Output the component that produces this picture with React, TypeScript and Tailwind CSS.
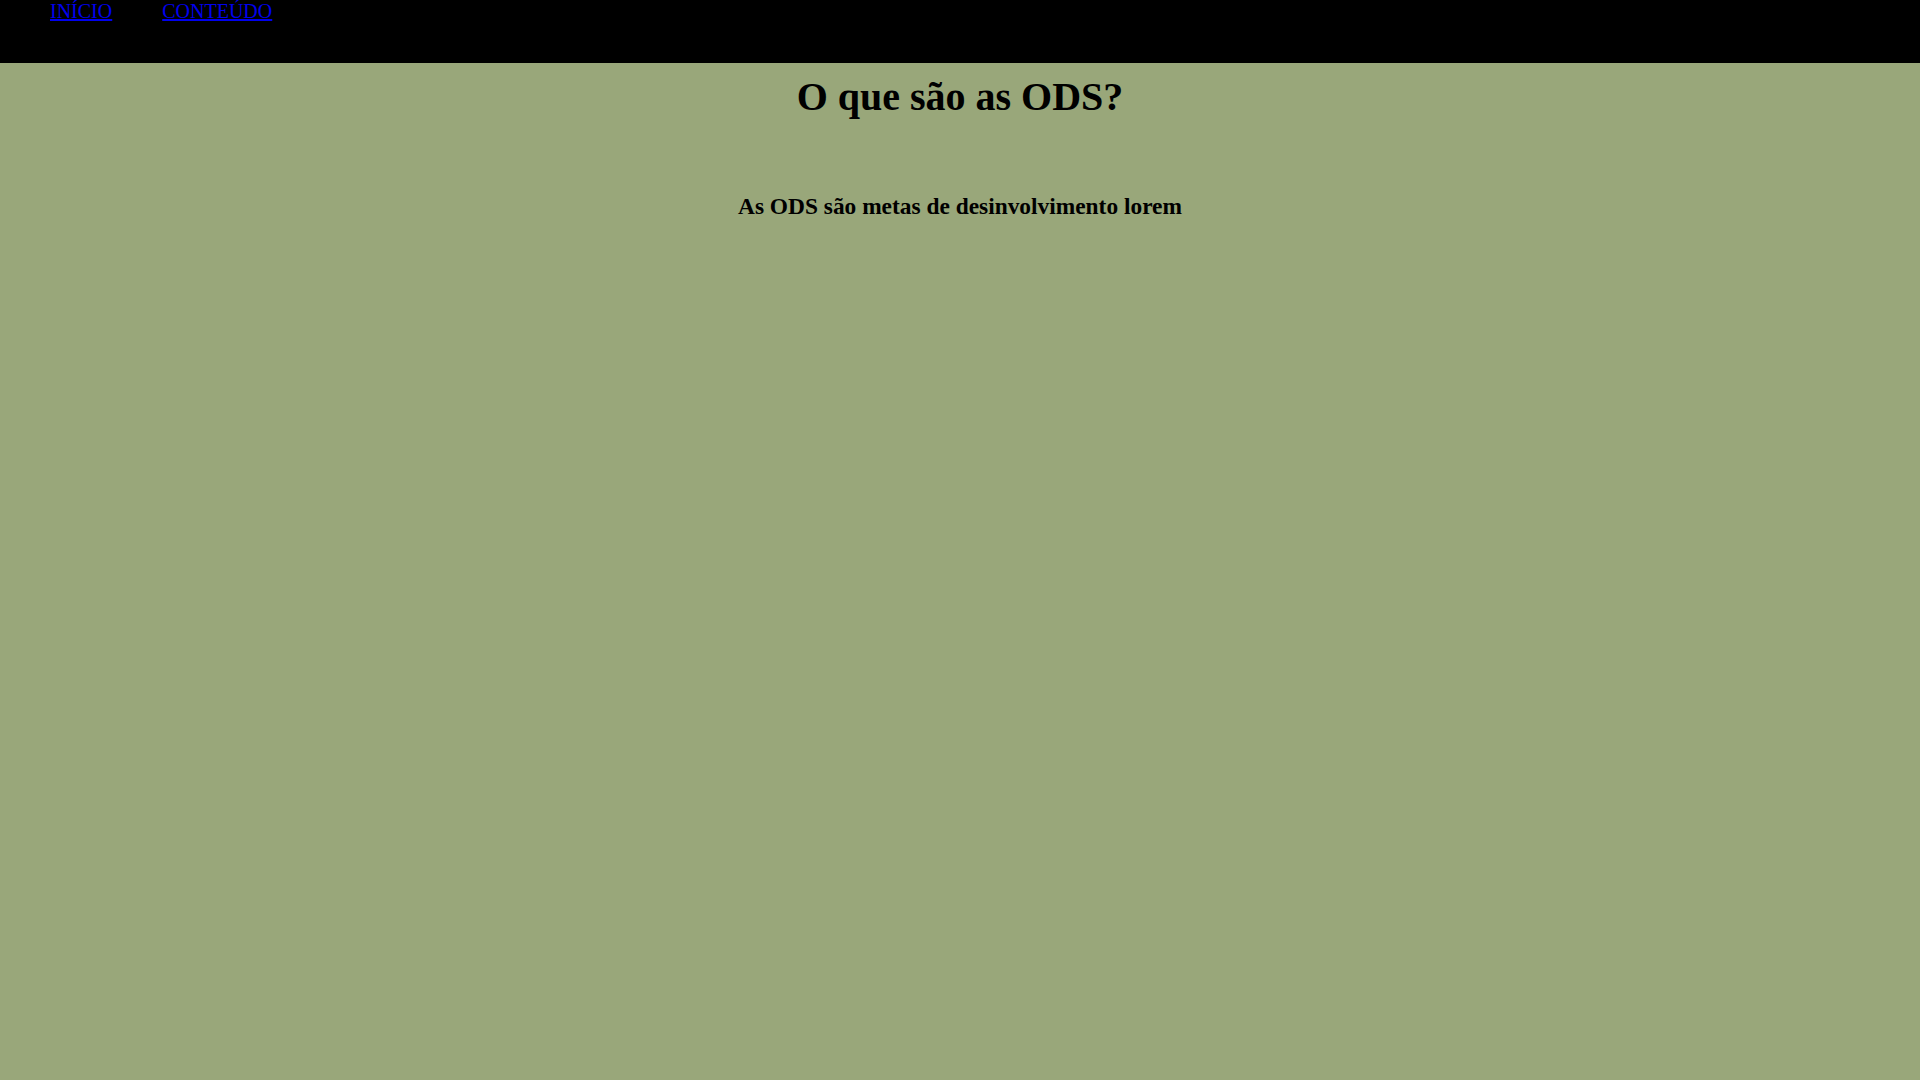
import React from 'react';

const links = ['INÍCIO', 'CONTEÚDO'];

export default function App() {
  return (
    <div className="min-h-screen bg-[#99a77a] font-['Liberation_Serif',serif] text-black">
      <nav className="h-[63px] bg-black pl-[50px]">
        <ul className="flex gap-[50px] text-[20px] leading-[23px]">
          {links.map((l) => (
            <li key={l}>
              <a href="#" className="text-[#0000ee] underline">
                {l}
              </a>
            </li>
          ))}
        </ul>
      </nav>
      <main className="flex flex-col items-center">
        <h1 className="mt-[11px] text-[40px] leading-[46px] font-bold">O que são as ODS?</h1>
        <h3 className="mt-[73px] text-[23.4px] leading-[27px] font-bold">
          As ODS são metas de desinvolvimento lorem
        </h3>
      </main>
    </div>
  );
}
